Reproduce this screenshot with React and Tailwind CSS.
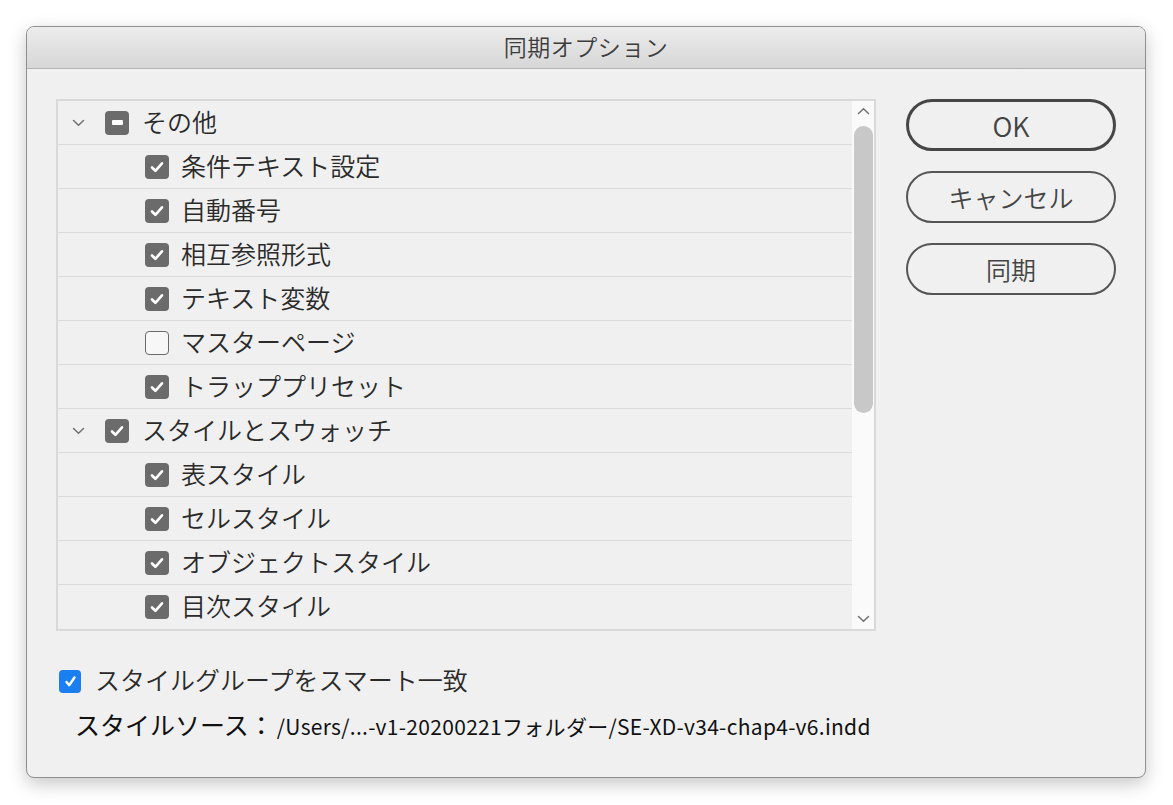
import React from 'react';

const JP = { fontFamily: '"Hiragino Sans", "Noto Sans CJK JP", "Noto Sans", sans-serif' };

const rows = [
    { label: 'その他', level: 0, state: 'mixed' },
    { label: '条件テキスト設定', level: 1, state: 'on' },
    { label: '自動番号', level: 1, state: 'on' },
    { label: '相互参照形式', level: 1, state: 'on' },
    { label: 'テキスト変数', level: 1, state: 'on' },
    { label: 'マスターページ', level: 1, state: 'off' },
    { label: 'トラッププリセット', level: 1, state: 'on' },
    { label: 'スタイルとスウォッチ', level: 0, state: 'on' },
    { label: '表スタイル', level: 1, state: 'on' },
    { label: 'セルスタイル', level: 1, state: 'on' },
    { label: 'オブジェクトスタイル', level: 1, state: 'on' },
    { label: '目次スタイル', level: 1, state: 'on' },
];

const Check = ({ state }) => {
    if (state === 'off') {
        return <div className="w-[24px] h-[24px] rounded-[4px] border-[1.5px] border-[#6a6a6a] bg-[#f7f7f7] shrink-0" />;
    }
    return (
        <div className="w-[24px] h-[24px] rounded-[4px] bg-[#6b6b6b] flex items-center justify-center shrink-0">
            {state === 'mixed' ? (
                <div className="w-[11px] h-[5px] rounded-[1px] bg-white" />
            ) : (
                <svg width="14" height="12" viewBox="0 0 14 12" fill="none">
                    <path d="M2 6.5 L5.4 9.8 L12 2.3" stroke="white" strokeWidth="2.6" strokeLinecap="round" strokeLinejoin="round" />
                </svg>
            )}
        </div>
    );
};

const Chevron = ({ up = false, className = '' }) => (
    <svg width="13" height="8" viewBox="0 0 13 8" className={className}>
        <path d={up ? 'M1.5 6.5 L6.5 1.8 L11.5 6.5' : 'M1.5 1.5 L6.5 6.2 L11.5 1.5'} stroke="#707070" strokeWidth="1.5" fill="none" strokeLinecap="round" />
    </svg>
);

export default function App() {
    return (
        <div className="w-[1173px] h-[805px] bg-white pt-[26px] pl-[26px] font-[350]" style={JP}>
            <div className="w-[1120px] h-[752px] rounded-[8px] border border-[#8f8f8f] bg-[#f0f0f0] overflow-hidden flex flex-col shadow-[0_6px_18px_rgba(0,0,0,0.22)]">
                {/* title bar */}
                <div className="h-[42px] shrink-0 bg-gradient-to-b from-[#ececec] to-[#d7d7d7] border-b border-[#b3b3b3] flex items-center justify-center">
                    <span className="text-[23px] text-[#3c3c3c] leading-none tracking-[0.5px] -mt-[3px]">同期オプション</span>
                </div>

                <div className="flex-1 flex flex-col pl-[29px] pr-[29px] pt-[30px]">
                    <div className="flex">
                        {/* list box */}
                        <div className="w-[820px] h-[532px] border-2 border-[#d9d9d9] flex">
                            <div className="flex-1 flex flex-col overflow-hidden">
                                {rows.map((r, i) => (
                                    <div key={i} className={`h-[44px] shrink-0 flex items-center ${i < rows.length - 1 ? 'border-b border-[#dadada]' : ''}`}>
                                        {r.level === 0 ? (
                                            <>
                                                <div className="w-[37px] flex justify-end pr-[10px]"><Chevron className="mt-[1px]" /></div>
                                                <div className="ml-[10px]"><Check state={r.state} /></div>
                                                <span className="ml-[13px] -mt-[3px] text-[25px] text-[#2a2a2a] leading-none">{r.label}</span>
                                            </>
                                        ) : (
                                            <>
                                                <div className="ml-[87px]"><Check state={r.state} /></div>
                                                <span className="ml-[12px] -mt-[3px] text-[25px] text-[#2a2a2a] leading-none">{r.label}</span>
                                            </>
                                        )}
                                    </div>
                                ))}
                            </div>
                            {/* scrollbar */}
                            <div className="w-[22px] bg-[#fafafa] flex flex-col items-center pt-[6px] pb-[6px]">
                                <Chevron up />
                                <div className="w-[19px] h-[287px] mt-[11px] rounded-full bg-[#c8c8c8]" />
                                <div className="flex-1" />
                                <Chevron />
                            </div>
                        </div>

                        {/* buttons */}
                        <div className="ml-[30px] flex flex-col gap-[20px]">
                            <button className="w-[210px] h-[52px] rounded-full border-[3px] border-[#464646] text-[27px] text-[#444] leading-none">OK</button>
                            <button className="w-[210px] h-[52px] rounded-full border-2 border-[#555] text-[25px] text-[#444] leading-none">キャンセル</button>
                            <button className="w-[210px] h-[52px] rounded-full border-2 border-[#555] text-[25px] text-[#444] leading-none">同期</button>
                        </div>
                    </div>

                    {/* options */}
                    <div className="mt-[39px] flex items-center ml-[3px]">
                        <div className="w-[22px] h-[23px] rounded-[4px] bg-[#1a7ff0] flex items-center justify-center">
                            <svg width="13" height="13" viewBox="0 0 13 13" fill="none">
                                <path d="M2.5 7 L5.2 10.2 L10.5 2.5" stroke="white" strokeWidth="2.4" strokeLinecap="round" strokeLinejoin="round" />
                            </svg>
                        </div>
                        <span className="ml-[14px] -mt-[4px] text-[25px] text-[#2a2a2a] leading-none">スタイルグループをスマート一致</span>
                    </div>
                    <div className="mt-[19px] ml-[19px] flex items-baseline">
                        <span className="text-[25px] text-[#111] font-normal leading-none">スタイルソース：</span>
                        <span className="ml-[3px] text-[21px] text-[#111] font-normal leading-none tracking-[0.3px]">/Users/...-v1-20200221フォルダー/SE-XD-v34-chap4-v6.indd</span>
                    </div>
                </div>
            </div>
        </div>
    );
}
